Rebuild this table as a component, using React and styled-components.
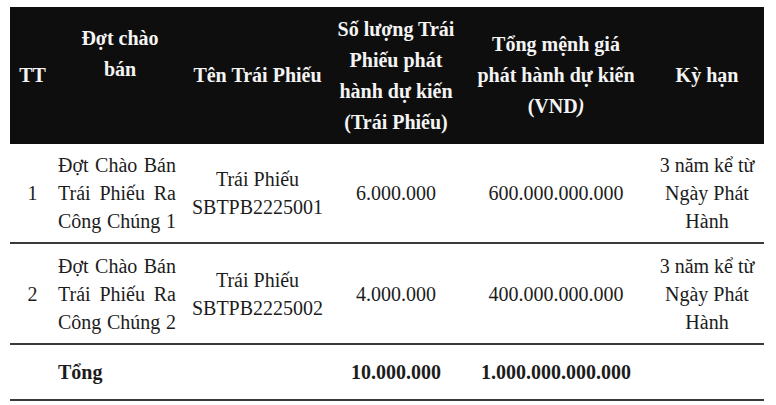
import React from "react";
import styled, { createGlobalStyle } from "styled-components";

const Global = createGlobalStyle`
  html, body { margin: 0; padding: 0; background: #ffffff; }
  body { font-family: "Liberation Serif", "Times New Roman", serif; color: #1c1c1c; }
`;

const Page = styled.div`
  width: 776px;
  height: 405px;
  padding: 7px 12px 0 10px;
  box-sizing: border-box;
  overflow: hidden;
`;

const Table = styled.table`
  width: 754px;
  border-collapse: collapse;
  table-layout: fixed;
  font-size: 20px;
`;

const HeadRow = styled.tr`
  background: #0e0e0e;
  height: 137px;
`;

const Th = styled.th`
  color: #f4f4f4;
  font-weight: bold;
  line-height: 31px;
  text-align: center;
  vertical-align: middle;
  padding: ${(p) => (p.$raise ? "0 4px 44px" : "0 4px")};
`;

const BodyRow = styled.tr`
  height: ${(p) => p.$h}px;
  border-bottom: 2px solid #3a3a3a;
`;

const Td = styled.td`
  line-height: 28px;
  vertical-align: middle;
  text-align: ${(p) => p.$align || "center"};
  font-weight: ${(p) => (p.$bold ? "bold" : "normal")};
  padding: ${(p) => p.$pad || "0 4px"};
  white-space: nowrap;
`;

const JLine = styled.span`
  display: block;
  text-align: justify;
  text-align-last: justify;
`;

const Italic = styled.i`
  font-style: italic;
`;

const rows = [
  { n: "1", code: "SBTPB2225001", qty: "6.000.000", val: "600.000.000.000", h: 99 },
  { n: "2", code: "SBTPB2225002", qty: "4.000.000", val: "400.000.000.000", h: 101 },
];

export default function App() {
  return (
    <>
      <Global />
      <Page>
        <Table>
          <colgroup>
            <col style={{ width: 45 }} />
            <col style={{ width: 130 }} />
            <col style={{ width: 145 }} />
            <col style={{ width: 132 }} />
            <col style={{ width: 188 }} />
            <col style={{ width: 114 }} />
          </colgroup>
          <thead>
            <HeadRow>
              <Th>TT</Th>
              <Th $raise>
                Đợt chào
                <br />
                bán
              </Th>
              <Th>Tên Trái Phiếu</Th>
              <Th>
                Số lượng Trái
                <br />
                Phiếu phát
                <br />
                hành dự kiến
                <br />
                (Trái Phiếu)
              </Th>
              <Th>
                Tổng mệnh giá
                <br />
                phát hành dự kiến
                <br />
                (VND<Italic>)</Italic>
              </Th>
              <Th>Kỳ hạn</Th>
            </HeadRow>
          </thead>
          <tbody>
            {rows.map((r) => (
              <BodyRow key={r.n} $h={r.h}>
                <Td>{r.n}</Td>
                <Td $align="left" $pad="0 9px 0 3px">
                  <JLine>Đợt Chào Bán</JLine>
                  <JLine>Trái Phiếu Ra</JLine>
                  <JLine>Công Chúng {r.n}</JLine>
                </Td>
                <Td>
                  Trái Phiếu
                  <br />
                  {r.code}
                </Td>
                <Td>{r.qty}</Td>
                <Td>{r.val}</Td>
                <Td>
                  3 năm kể từ
                  <br />
                  Ngày Phát
                  <br />
                  Hành
                </Td>
              </BodyRow>
            ))}
            <BodyRow $h={56}>
              <Td />
              <Td $bold $align="left" $pad="0 3px">
                Tổng
              </Td>
              <Td />
              <Td $bold>10.000.000</Td>
              <Td $bold>1.000.000.000.000</Td>
              <Td />
            </BodyRow>
          </tbody>
        </Table>
      </Page>
    </>
  );
}
